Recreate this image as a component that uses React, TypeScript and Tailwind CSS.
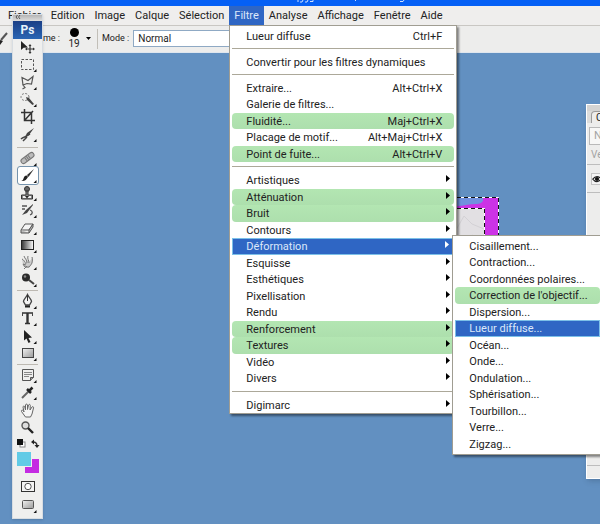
import React from 'react';
import clsx from 'clsx';

interface MenuEntry {
  label: string;
  shortcut?: string;
  marked?: boolean;
  active?: boolean;
  submenu?: boolean;
}

const menus = ['Fichier', 'Edition', 'Image', 'Calque', 'Sélection', 'Filtre', 'Analyse', 'Affichage', 'Fenêtre', 'Aide'];

const filterGroups: MenuEntry[][] = [
  [{ label: 'Lueur diffuse', shortcut: 'Ctrl+F' }],
  [{ label: 'Convertir pour les filtres dynamiques' }],
  [
    { label: 'Extraire...', shortcut: 'Alt+Ctrl+X' },
    { label: 'Galerie de filtres...' },
    { label: 'Fluidité...', shortcut: 'Maj+Ctrl+X', marked: true },
    { label: 'Placage de motif...', shortcut: 'Alt+Maj+Ctrl+X' },
    { label: 'Point de fuite...', shortcut: 'Alt+Ctrl+V', marked: true },
  ],
  [
    { label: 'Artistiques', submenu: true },
    { label: 'Atténuation', submenu: true, marked: true },
    { label: 'Bruit', submenu: true, marked: true },
    { label: 'Contours', submenu: true },
    { label: 'Déformation', submenu: true, active: true },
    { label: 'Esquisse', submenu: true },
    { label: 'Esthétiques', submenu: true },
    { label: 'Pixellisation', submenu: true },
    { label: 'Rendu', submenu: true },
    { label: 'Renforcement', submenu: true, marked: true },
    { label: 'Textures', submenu: true, marked: true },
    { label: 'Vidéo', submenu: true },
    { label: 'Divers', submenu: true },
  ],
  [{ label: 'Digimarc', submenu: true }],
];

const distortItems: MenuEntry[] = [
  { label: 'Cisaillement...' },
  { label: 'Contraction...' },
  { label: 'Coordonnées polaires...' },
  { label: "Correction de l'objectif...", marked: true },
  { label: 'Dispersion...' },
  { label: 'Lueur diffuse...', active: true },
  { label: 'Océan...' },
  { label: 'Onde...' },
  { label: 'Ondulation...' },
  { label: 'Sphérisation...' },
  { label: 'Tourbillon...' },
  { label: 'Verre...' },
  { label: 'Zigzag...' },
];

const MenuRow: React.FC<{ entry: MenuEntry }> = ({ entry }) => (
  <button
    type="button"
    role="menuitem"
    className={clsx(
      'flex h-full w-full items-center justify-between whitespace-nowrap pl-3.5 pt-0.5 text-left',
      entry.submenu ? 'pr-1' : 'pr-3',
      entry.marked && 'rounded bg-linear-to-b from-[#b3e6b2] to-[#addfad]',
      entry.active && 'border border-[#7cc0e8] bg-[#2f66c4] pl-[13px] text-[#dce8fa]',
    )}
  >
    <span>{entry.label}</span>
    {entry.shortcut && <span>{entry.shortcut}</span>}
    {entry.submenu && (
      <svg className="mb-1.5 h-[7px] w-1" viewBox="0 0 4 7" fill={entry.active ? '#fff' : '#000'} aria-hidden="true">
        <path d="M0 0 L4 3.5 L0 7z" />
      </svg>
    )}
  </button>
);

const DistortMenu: React.FC = () => (
  <ul
    role="menu"
    aria-label="Déformation"
    className="absolute -top-[3px] left-[220px] z-10 w-[149px] border border-[#a09d92] bg-white py-0.5 pl-0.5 text-[#222] shadow-[2px_2px_2px_rgba(0,0,0,0.45)]"
  >
    {distortItems.map((entry) => (
      <li key={entry.label} role="none" className="odd:h-4 even:h-[17px]">
        <MenuRow entry={entry} />
      </li>
    ))}
  </ul>
);

const FilterMenu: React.FC = () => (
  <div
    role="menu"
    aria-label="Filtre"
    className="absolute left-0 top-full z-30 w-[228px] border border-[#a09d92] bg-white px-0.5 pt-0.5 text-[#222] shadow-[2px_2px_2px_rgba(0,0,0,0.45)]"
  >
    {filterGroups.map((group, i) => (
      <React.Fragment key={group[0].label}>
        {i > 0 && <hr className="mb-[5px] mt-1 border-[#aca899]" />}
        <ul role="none">
          {group.map((entry) => (
            <li
              key={entry.label}
              role="none"
              className={clsx('relative', group.length > 5 ? 'odd:h-[17px] even:h-4' : 'odd:h-4 even:h-[17px]')}
            >
              <MenuRow entry={entry} />
              {entry.label === 'Déformation' && <DistortMenu />}
            </li>
          ))}
        </ul>
      </React.Fragment>
    ))}
  </div>
);

interface Tool {
  name: string;
  art: React.ReactNode;
  flyout?: boolean;
  selected?: boolean;
}

const toolGroups: Tool[][] = [
  [
    {
      name: 'Déplacement',
      art: (
        <>
          <path d="M3 2v9l2.5-2.3L10 8.5z" fill="#222" />
          <path d="M12 6v8M8 10h8" stroke="#333" strokeWidth="1.2" />
          <path d="M12 5l-1.5 2h3zM12 15l-1.5-2h3zM7 10l2-1.5v3zM17 10l-2-1.5v3z" fill="#333" />
        </>
      ),
    },
    {
      name: 'Rectangle de sélection',
      flyout: true,
      art: <rect x="3.5" y="3.5" width="12" height="10" stroke="#555" strokeDasharray="2.5 1.5" />,
    },
    {
      name: 'Lasso',
      flyout: true,
      art: <path d="M5 11L4 3.5l6 3 5-4-1.5 7.5-4.500-.5L5 11l2 2.500L4.500 15" stroke="#555" strokeWidth="1.2" />,
    },
    {
      name: 'Sélection rapide',
      flyout: true,
      art: (
        <>
          <ellipse cx="7" cy="6" rx="4" ry="3.5" stroke="#777" strokeDasharray="2 1.5" />
          <path d="M8 6l3 1 5 6-1.5 1L9 9z" fill="#444" />
        </>
      ),
    },
    {
      name: 'Recadrage',
      art: <path d="M6.5 1v11.5H17M3 4.5h10.5V16M6.5 12.5L15 3" stroke="#333" strokeWidth="1.5" />,
    },
    {
      name: 'Tranche',
      flyout: true,
      art: (
        <>
          <path d="M16 2L9 7l-2 4 4-2z" fill="#444" />
          <path d="M3 13c3-3 4-1 9-5M5 15l4-4" stroke="#444" strokeWidth="1.5" />
        </>
      ),
    },
  ],
  [
    {
      name: 'Correcteur',
      flyout: true,
      art: (
        <>
          <path d="M5.5 11L13.5 5" stroke="#777" strokeWidth="6" strokeLinecap="round" />
          <path d="M5.5 11L13.5 5" stroke="#bbb" strokeWidth="4" strokeLinecap="round" />
          <path d="M7.5 9.5l4-3" stroke="#777" strokeWidth="4" strokeDasharray="1 1" />
        </>
      ),
    },
    {
      name: 'Pinceau',
      flyout: true,
      selected: true,
      art: (
        <>
          <path d="M16 2l-7 6 1.5 2z" fill="#333" />
          <path d="M3 14c3 0 2-5 5-5.5 2 0 2.5 1.5 1 3C7.5 14 5 14 3 14z" fill="#222" />
        </>
      ),
    },
    {
      name: 'Tampon de duplication',
      flyout: true,
      art: (
        <>
          <circle cx="9" cy="4" r="2.5" fill="#666" stroke="#333" />
          <path d="M8 6h2v4h4.5v4h-11v-4H8z" fill="#888" stroke="#333" />
          <path d="M5 12h8" stroke="#eee" strokeWidth="2" />
          <path d="M7 11h4l-2 2.5z" fill="#222" />
        </>
      ),
    },
    {
      name: "Forme d'historique",
      flyout: true,
      art: (
        <>
          <path d="M15 2L8 8l-4 5 5-2 6-8z" fill="#444" />
          <path d="M4 4h5M4 7h3M12 8c3 1 3 4 0 5" stroke="#555" strokeWidth="1.3" />
        </>
      ),
    },
    {
      name: 'Gomme',
      flyout: true,
      art: (
        <>
          <path d="M3 11l4-6h8l-4 6z" fill="#f4f4f4" stroke="#555" />
          <path d="M3 11v3h8v-3l4-6v3l-4 6" fill="#bbb" stroke="#555" />
        </>
      ),
    },
    {
      name: 'Dégradé',
      flyout: true,
      art: <rect x="3.5" y="3.5" width="12" height="9" fill="url(#tool-gradient)" stroke="#222" />,
    },
    {
      name: 'Doigt',
      flyout: true,
      art: (
        <>
          <path d="M4 4l4 7V4l3 4 4-5v6l-4 5H8l-3-2z" fill="#ccc" />
          <path d="M4 5c2 1 3 3 4 5M6 2c1 3 3 4 3 7M10 2c-1 3 1 4 1 7M14 3c1 4 0 7-3 10H7l-2-3 3 1M6 15l3-3" stroke="#777" />
        </>
      ),
    },
    {
      name: 'Densité',
      flyout: true,
      art: (
        <>
          <circle cx="8" cy="6.5" r="4" fill="#2b2b2b" />
          <circle cx="7" cy="5.5" r="1.2" fill="#888" />
          <path d="M11 9l5 4" stroke="#444" strokeWidth="2" />
        </>
      ),
    },
  ],
  [
    {
      name: 'Plume',
      flyout: true,
      art: (
        <>
          <path d="M9.5 1.5C8 5 5.5 6 5.5 8.5L7.5 12h4l2-3.5C13.5 6 11 5 9.5 1.5z" fill="#f4f4f4" stroke="#444" strokeWidth="1.3" />
          <path d="M9.5 2v6" stroke="#333" />
          <path d="M7 13.5h5" stroke="#222" strokeWidth="2" />
        </>
      ),
    },
    {
      name: 'Texte',
      flyout: true,
      art: (
        <>
          <path d="M9.5 3v10" stroke="#333" strokeWidth="2.4" />
          <path d="M4 3h11M7 13.5h5" stroke="#333" strokeWidth="1.5" />
          <path d="M4.500 3v3M14.500 3v3" stroke="#444" />
        </>
      ),
    },
    {
      name: 'Sélection de tracé',
      flyout: true,
      art: <path d="M6 2v10.5l2.5-2 2 4.5 2-1-2-4 3.5-.5z" fill="#222" />,
    },
    {
      name: 'Rectangle',
      flyout: true,
      art: <rect x="4.5" y="3.5" width="11" height="9" fill="url(#shape-gradient)" stroke="#444" />,
    },
  ],
  [
    {
      name: 'Annotations',
      flyout: true,
      art: (
        <>
          <path d="M4.5 2.5h11v8l-3 3h-8z" fill="#eee" stroke="#555" />
          <path d="M6 5.5h8M6 7.5h8M6 9.5h5" stroke="#888" />
          <path d="M12.5 13.5v-3h3" fill="#999" stroke="#555" />
        </>
      ),
    },
    {
      name: 'Pipette',
      flyout: true,
      art: (
        <>
          <path d="M4 14l7-7" stroke="#666" strokeWidth="2" />
          <path d="M9 5l4 4M11 7l3.5-3.5" stroke="#222" strokeWidth="2.5" />
        </>
      ),
    },
    {
      name: 'Main',
      art: (
        <path
          d="M7.5 15L3.5 9.5c-.5-1.5 1-2 2-.5L6 10 5 5c0-1.2 1.5-1.2 1.8 0L7.5 8V3c.3-1.2 1.7-1.2 2 0v4.5l1-4.5c.5-1 1.8-.8 1.8.5l-.3 4.5L14 5c.8-.8 1.8-.2 1.5 1L14 12l-1.5 3z"
          fill="#f6f6f6"
          stroke="#666"
        />
      ),
    },
    {
      name: 'Zoom',
      art: (
        <>
          <circle cx="7.5" cy="6.5" r="3.5" fill="#ddd" stroke="#555" strokeWidth="1.4" />
          <path d="M10 9l5 5" stroke="#222" strokeWidth="2.4" />
        </>
      ),
    },
  ],
];

const ToolIcon: React.FC<{ tool: Tool }> = ({ tool }) => (
  <svg className="h-[17px] w-5" viewBox="0 0 20 17" fill="none" aria-hidden="true">
    {tool.art}
    {tool.flyout && <path d="M18.5 13v3h-3z" fill="#111" />}
  </svg>
);

const Toolbox: React.FC = () => (
  <aside className="absolute left-3 top-3.5 z-20 w-[31px] border border-[#d8dde2] bg-[#efefee] pb-1 shadow-sm">
    <svg width="0" height="0" className="absolute" aria-hidden="true">
      <linearGradient id="tool-gradient">
        <stop offset="0" stopColor="#333" />
        <stop offset="1" stopColor="#fff" />
      </linearGradient>
      <linearGradient id="shape-gradient" x2="1" y2="1">
        <stop offset="0" stopColor="#f2f2f2" />
        <stop offset="1" stopColor="#999" />
      </linearGradient>
    </svg>
    <div className="h-1.5 bg-linear-to-b from-[#b4b4b4] to-[#dedede]">
      <svg className="ml-0.5 h-1 w-1.5" viewBox="0 0 6 4" stroke="#555" fill="none" aria-hidden="true">
        <path d="M2.5 0L1 2l1.5 2M5 0L3.5 2 5 4" />
      </svg>
    </div>
    <div className="flex h-[18px] items-center justify-center bg-linear-to-b from-[#1b3f86] to-[#2b66b4] text-xs font-bold text-[#e6f2fb]">
      Ps
    </div>
    {toolGroups.map((group, i) => (
      <React.Fragment key={group[0].name}>
        {i > 0 && <hr className="mx-1 my-0.5 border-[#bdb9b2]" />}
        <div className={clsx('flex flex-col items-center', i === 0 && 'pb-0.5')}>
          {group.map((tool) => (
            <button
              key={tool.name}
              type="button"
              aria-label={tool.name}
              className={clsx(
                'flex h-[17px] items-center rounded-xs nth-[3n]:h-[18px]',
                tool.selected && 'bg-white outline outline-[#7593ad]',
              )}
            >
              <ToolIcon tool={tool} />
            </button>
          ))}
        </div>
      </React.Fragment>
    ))}
    <svg className="mx-auto mt-[3px] h-9 w-6" viewBox="0 0 24 36" fill="none" role="img" aria-label="Couleurs">
      <rect x="4" y="3" width="5" height="5" fill="#fff" stroke="#888" />
      <rect x="1" y="0" width="6" height="6" fill="#111" />
      <path d="M17 3c3 0 4 1 4 4" stroke="#333" strokeWidth="1.3" />
      <path d="M15 3l3-2.5v5zM21 9l-2.5-3h5z" fill="#222" />
      <rect x="9" y="20" width="14" height="14" fill="#c42be2" />
      <rect x="0" y="12" width="16" height="16" fill="#efefee" />
      <rect x="1" y="13" width="14" height="14" fill="#62cbe6" />
    </svg>
    <div className="mt-[3px] flex flex-col items-center gap-1">
      <button type="button" aria-label="Mode masque" className="block">
        <svg className="h-4 w-5" viewBox="0 0 20 16" fill="none" aria-hidden="true">
          <rect x="3.5" y="3.5" width="13" height="10" fill="#f4f4f4" stroke="#333" />
          <circle cx="10" cy="8.5" r="3.2" fill="#fff" stroke="#555" />
        </svg>
      </button>
      <button type="button" aria-label="Mode écran" className="block">
        <svg className="h-4 w-5" viewBox="0 0 20 16" fill="none" aria-hidden="true">
          <rect x="4.5" y="2.5" width="11" height="8" rx="1" fill="url(#shape-gradient)" stroke="#555" />
          <path d="M18.5 12v3h-3z" fill="#111" />
        </svg>
      </button>
    </div>
  </aside>
);

const OptionsBar: React.FC = () => (
  <div className="flex h-[27px] items-center border-b border-[#dfe6ee] bg-[#ededec] pb-px">
    <svg className="h-4 w-2" viewBox="0 0 8 16" fill="none" aria-hidden="true">
      <path d="M7 2L1 9" stroke="#555" strokeWidth="2" />
      <path d="M0 9l3 1-3 4z" fill="#222" />
    </svg>
    <span className="w-[52px] whitespace-nowrap text-right text-[9px]">me :</span>
    <button type="button" aria-label="Diamètre 19" className="ml-1.5 flex items-center gap-1">
      <span className="flex w-4 flex-col items-center text-[10px] leading-[10px]">
        <span className="size-[9px] rounded-full bg-black" />
        <span className="mt-0.5">19</span>
      </span>
      <svg className="h-[3px] w-[5px]" viewBox="0 0 5 3" aria-hidden="true">
        <path d="M0 0h5L2.5 3z" />
      </svg>
    </button>
    <span className="ml-1.5 h-5 w-px bg-[#c2bfb8]" />
    <label htmlFor="mode" className="ml-1 text-[9px]">Mode :</label>
    <select id="mode" className="ml-1 h-[17px] w-28 appearance-none border border-[#8fa9c4] bg-white pl-1 text-[10px]">
      <option>Normal</option>
    </select>
  </div>
);

const LayersPanel: React.FC = () => (
  <aside className="absolute left-[586px] top-[104px] w-[200px] border border-white bg-[#ededec] shadow-md">
    <div className="h-1.5 bg-[#d4d4d3]" />
    <div className="bg-[#dcdcdb] pl-1">
      <div className="h-3 w-16 rounded-t-sm border border-b-0 border-[#9c9c9c] bg-[#ededec] pl-1 text-[10px] leading-3">Calques</div>
    </div>
    <div className="ml-0.5 mt-1 h-[18px] border border-[#b9b9b9] bg-[#f7f7f6] pl-1 leading-4 text-[#a3a3a3]">Normal</div>
    <div className="h-5 border-b border-[#bdbdbd] pl-1 text-[10px] leading-5 text-[#a3a3a3]">Verrou</div>
    <div className="flex h-7 items-center border-b border-[#bdbdbd] pl-1">
      <svg className="h-3 w-3 border border-[#c4c4c4] bg-[#f4f4f4]" viewBox="0 0 12 12" aria-hidden="true">
        <path d="M1 6c3-4 7-4 10 0-3 4-7 4-10 0z" fill="#fff" stroke="#222" strokeWidth="1.5" />
        <circle cx="6" cy="6" r="2.5" fill="#111" />
      </svg>
    </div>
    <div className="h-[273px] border-b border-[#bdbdbd]" />
    <div className="h-3" />
  </aside>
);

const Document: React.FC = () => (
  <svg className="absolute left-[380px] top-[197px] h-32 w-[120px]" viewBox="0 0 120 128" fill="none" aria-hidden="true">
    <rect width="119" height="128" fill="#cc33e6" />
    <path d="M0 0h102c3 3 0 7-5 7-8 0-14 2-20 2H0z" fill="#7191de" />
    <rect y="11" width="105" height="117" fill="#e2e0e3" />
    <path d="M76 33l8-14 8 8 12 5M80 50l12-12 8 4" stroke="#d3d1d5" />
    <path d="M0 11.5h104.5V128M0 .5h118.5V128" stroke="#fff" />
    <path d="M0 11.5h104.5V128M0 .5h118.5V128" stroke="#111" strokeDasharray="4 3" />
  </svg>
);

const App: React.FC = () => (
  <div className="relative min-h-screen overflow-hidden bg-[#6290c1] font-['Roboto','Liberation_Sans',sans-serif] text-[11px] text-[#222]">
    <header>
      <div className="h-1.5 bg-[#0560f5]">
        <svg className="ml-[297px] h-[3px] w-[110px]" viewBox="0 0 110 3" fill="none" stroke="#cfe0ff" aria-hidden="true">
          <path d="M1 0v2M6 0l-1 2H3M11 0l-1 2H8M16 0v1.5h-3M107 0l-1 1.5h-3M59 0l-1 1" />
        </svg>
      </div>
      <nav className="flex h-5 border-b border-[#c9c7c3] bg-[#efeeed] pl-[3px]">
        {menus.map((name) => (
          <div key={name} className="relative">
            <button
              type="button"
              className={clsx('h-full px-[5px] leading-5', name === 'Filtre' && 'bg-[#2f66c4] text-[#dce8fa]')}
            >
              {name}
            </button>
            {name === 'Filtre' && <FilterMenu />}
          </div>
        ))}
      </nav>
      <OptionsBar />
    </header>
    <main>
      <Document />
      <LayersPanel />
    </main>
    <Toolbox />
  </div>
);

export default App;
